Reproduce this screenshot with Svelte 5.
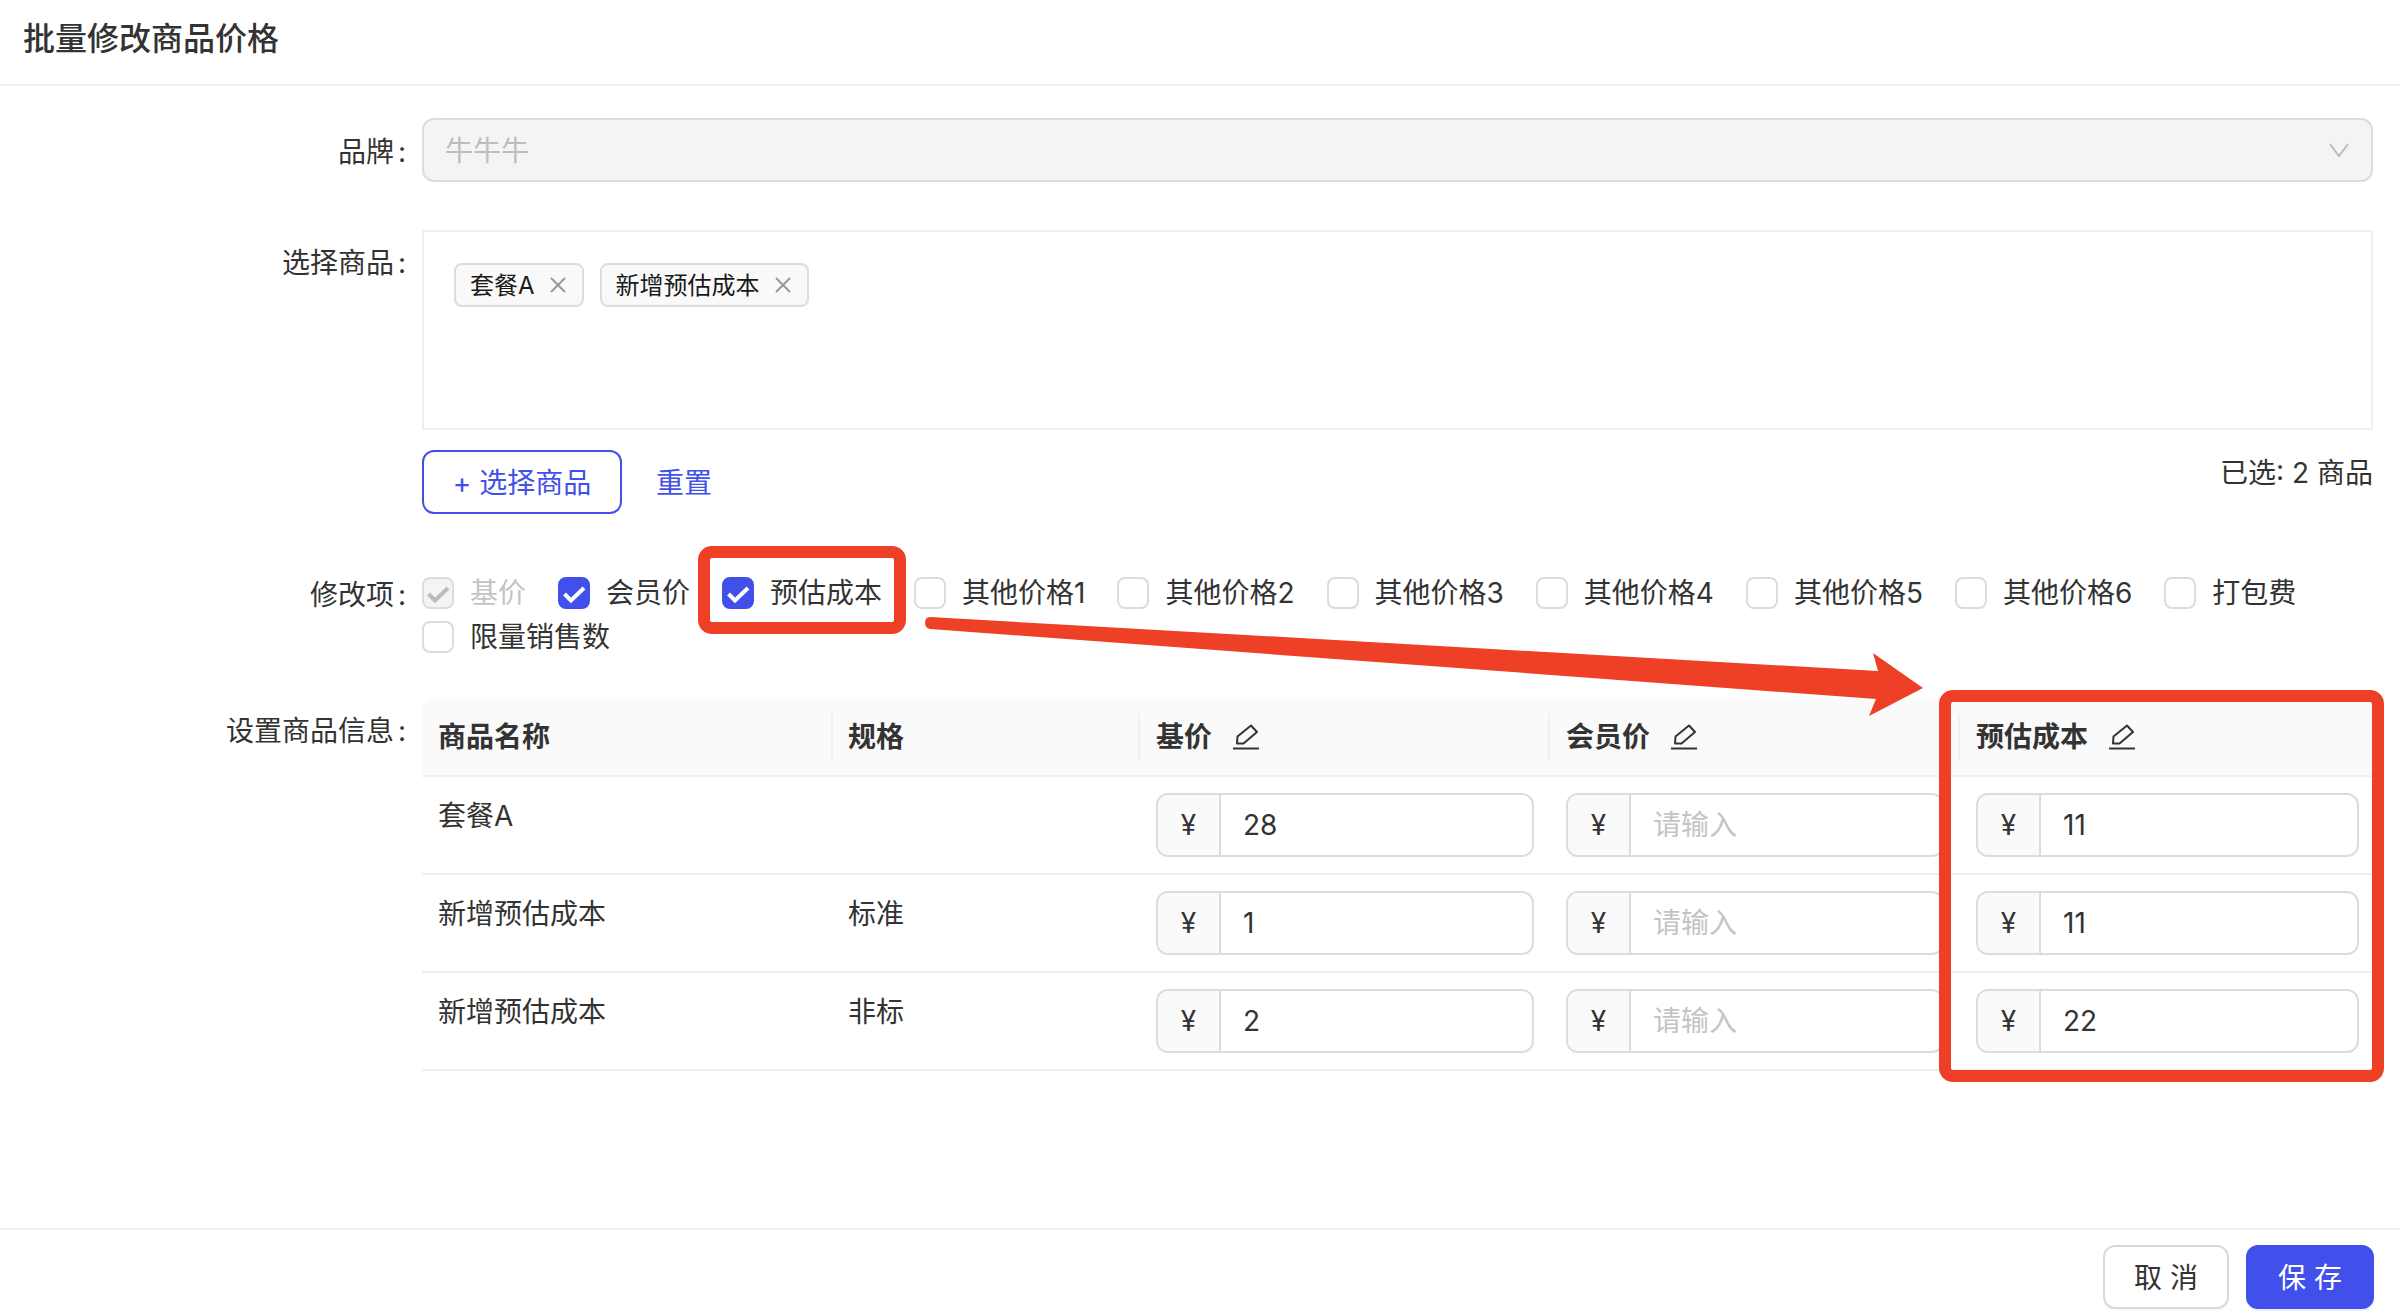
<script>
	const options = [
		{ name: "基价", checked: true, disabled: true },
		{ name: "会员价", checked: true },
		{ name: "预估成本", checked: true },
		{ name: "其他价格1" },
		{ name: "其他价格2" },
		{ name: "其他价格3" },
		{ name: "其他价格4" },
		{ name: "其他价格5" },
		{ name: "其他价格6" },
		{ name: "打包费" },
		{ name: "限量销售数" }
	]
	const tags = ["套餐A", "新增预估成本"]
	const rows = [
		{ name: "套餐A", spec: "", base: "28", cost: "11" },
		{ name: "新增预估成本", spec: "标准", base: "1", cost: "11" },
		{ name: "新增预估成本", spec: "非标", base: "2", cost: "22" }
	]
	const priceCols = ["基价", "会员价", "预估成本"]
</script>

{#snippet pencil()}
	<svg class="pencil" width="26" height="26" viewBox="0 0 26 26" fill="none" stroke="#333" stroke-width="2">
		<path d="M4 19.500 4.500 12.500 18 1.500 24 8 10.500 19.500Z" stroke-linejoin="round" />
		<path d="M0 24.500H26" />
	</svg>
{/snippet}

{#snippet money(value, placeholder)}
	<div class="money">
		<span class="prefix">¥</span>
		<span class="value" class:empty={!value}>{value || placeholder}</span>
	</div>
{/snippet}

<div class="page">
	<header class="top">批量修改商品价格</header>

	<main class="form">
		<div class="row brand">
			<div class="label">品牌<i>:</i></div>
			<div class="select">
				<span>牛牛牛</span>
				<svg width="20" height="14" viewBox="0 0 20 14" fill="none" stroke="#bbb" stroke-width="2"><path d="M1 1 10 13 19 1" /></svg>
			</div>
		</div>

		<div class="row goods">
			<div class="label">选择商品<i>:</i></div>
			<div class="tagbox">
				{#each tags as tag}
					<span class="tag">
						<span class="tag-name">{tag}</span>
						<svg width="16" height="16" viewBox="0 0 16 16" stroke="#999" stroke-width="2"><path d="M1 1 15 15M15 1 1 15" /></svg>
					</span>
				{/each}
			</div>
		</div>

		<div class="row actions">
			<div class="label"></div>
			<div class="actions-body">
				<button class="outline">+ 选择商品</button>
				<button class="link">重置</button>
				<span class="count">已选: 2 商品</span>
			</div>
		</div>

		<div class="row items">
			<div class="label">修改项<i>:</i></div>
			<div class="checks">
				{#each options as opt}
					<label class="check" class:disabled={opt.disabled}>
						<span class="box" class:on={opt.checked}>
							{#if opt.checked}
								<svg width="28" height="28" viewBox="0 0 28 28" fill="none" stroke="currentColor" stroke-width="4"><path d="M4.500 15 11 21.500 24 9" /></svg>
							{/if}
						</span>
						{opt.name}
					</label>
				{/each}
			</div>
		</div>

		<div class="row info">
			<div class="label">设置商品信息<i>:</i></div>
			<table>
				<colgroup>
					<col style="width:409px" />
					<col style="width:307px" />
					<col style="width:410px" />
					<col style="width:410px" />
					<col />
				</colgroup>
				<thead>
					<tr>
						<th><div class="cell first">商品名称</div></th>
						<th><div class="cell second">规格</div></th>
						{#each priceCols as col}
							<th><div class="cell">{col}{@render pencil()}</div></th>
						{/each}
					</tr>
				</thead>
				<tbody>
					{#each rows as r}
						<tr>
							<td class="text">{r.name}</td>
							<td class="text spec">{r.spec}</td>
							<td>{@render money(r.base, "")}</td>
							<td>{@render money("", "请输入")}</td>
							<td>{@render money(r.cost, "")}</td>
						</tr>
					{/each}
				</tbody>
			</table>
		</div>
	</main>

	<footer class="bottom">
		<button class="cancel">取 消</button>
		<button class="save">保 存</button>
	</footer>

	<!-- hand drawn annotation on top of the screenshot -->
	<svg class="marks" width="2400" height="1316" viewBox="0 0 2400 1316" fill="none">
		<rect x="704" y="552" width="196" height="76" rx="8" stroke="#ee4026" stroke-width="12" />
		<rect x="1945" y="696" width="433" height="380" rx="8" stroke="#ee4026" stroke-width="12" />
		<path d="M930 617 1878 671 1873 653 1923 688 1869 716 1876 699 930 629Q925 628 925 623 925 617 930 617Z" fill="#ee4026" />
	</svg>
</div>

<style>
	:global(body) {
		margin: 0;
		background: #fff;
	}
	.page {
		position: relative;
		display: flex;
		flex-direction: column;
		height: 1316px;
		overflow: hidden;
		font-family: Inter, "Noto Sans CJK SC", "Noto Sans", sans-serif;
		font-size: 28px;
		line-height: 44px;
		color: #333;
	}
	.top {
		box-sizing: border-box;
		height: 86px;
		padding: 17px 23px 0;
		border-bottom: 2px solid #f2f2f2;
		font-size: 32px;
		font-weight: 500;
	}
	.form {
		flex: 1;
		padding: 32px 27px 0 0;
	}
	.row {
		display: grid;
		grid-template-columns: 406px 1fr;
		column-gap: 16px;
	}
	.label {
		text-align: right;
	}
	.label i {
		margin-left: 4px;
		font-style: normal;
	}
	.brand .label {
		padding-top: 12px;
	}
	.select {
		box-sizing: border-box;
		display: flex;
		align-items: center;
		justify-content: space-between;
		height: 64px;
		padding: 0 22px 0 21px;
		border: 2px solid #dcdcdc;
		border-radius: 12px;
		background: #f4f4f4;
		color: #bdbdbd;
	}
	.select span {
		padding-top: 2px;
	}
	.goods {
		margin-top: 48px;
	}
	.goods .label {
		padding-top: 11px;
	}
	.tagbox {
		box-sizing: border-box;
		display: flex;
		align-items: flex-start;
		gap: 16px;
		height: 200px;
		padding: 31px 30px;
		border: 2px solid #eeeef5;
	}
	.tag {
		box-sizing: border-box;
		display: flex;
		align-items: center;
		gap: 15px;
		height: 44px;
		padding: 0 16px 0 14px;
		border: 2px solid #dcdcdc;
		border-radius: 8px;
		background: #f9f9f9;
		font-size: 24px;
		line-height: 40px;
		color: #1a1a1a;
	}
	.tag-name {
		padding-top: 2px;
	}
	.actions {
		margin-top: 20px;
	}
	.actions-body {
		display: flex;
		align-items: flex-start;
	}
	button {
		box-sizing: border-box;
		height: 64px;
		margin: 0;
		padding: 2px 0 0;
		border: 2px solid transparent;
		border-radius: 12px;
		background: #fff;
		font: inherit;
		color: inherit;
	}
	.outline {
		width: 200px;
		border-color: #4150ea;
		color: #4150ea;
	}
	.link {
		margin-left: 34px;
		border: 0;
		color: #4150ea;
	}
	.count {
		margin-left: auto;
		margin-top: 1px;
	}
	.items {
		margin-top: 57px;
	}
	.items .label {
		padding-top: 2px;
	}
	.checks {
		display: flex;
		flex-wrap: wrap;
		column-gap: 32px;
	}
	.check {
		display: flex;
		align-items: center;
		gap: 16px;
	}
	.check.disabled {
		color: #c4c4c4;
	}
	.box {
		box-sizing: border-box;
		display: flex;
		align-items: center;
		justify-content: center;
		width: 32px;
		height: 32px;
		border: 2px solid #dcdcdc;
		border-radius: 8px;
		background: #fff;
	}
	.box.on {
		border-color: #4150ea;
		background: #4150ea;
		color: #fff;
	}
	.disabled .box {
		border-color: #dcdcdc;
		background: #f4f4f4;
		color: #bbb;
	}
	.info {
		margin-top: 40px;
	}
	.info .label {
		padding-top: 10px;
	}
	table {
		width: 100%;
		table-layout: fixed;
		border-collapse: separate;
		border-spacing: 0;
	}
	th {
		box-sizing: border-box;
		height: 76px;
		padding: 15px 0;
		border-bottom: 2px solid #f0f0f0;
		background: #fafafa;
		font-weight: 600;
		text-align: left;
	}
	th:first-child {
		border-top-left-radius: 12px;
	}
	.cell {
		display: flex;
		align-items: center;
		height: 46px;
		padding-left: 16px;
		border-left: 2px solid #f0f0f0;
	}
	.cell.first {
		padding-left: 16px;
		border-left: 0;
	}
	.cell.second {
		padding-left: 15px;
	}
	.pencil {
		margin-left: 21px;
	}
	td {
		box-sizing: border-box;
		height: 98px;
		padding: 16px 14px 16px 18px;
		border-bottom: 2px solid #f0f0f0;
		vertical-align: top;
	}
	td.text {
		padding: 17px 16px 0 16px;
	}
	td.spec {
		padding-left: 17px;
	}
	.money {
		box-sizing: border-box;
		display: flex;
		height: 64px;
		border: 2px solid #dcdcdc;
		border-radius: 12px;
		line-height: 60px;
		overflow: hidden;
	}
	.prefix {
		flex: none;
		width: 63px;
		border-right: 2px solid #dcdcdc;
		background: #fafafa;
		text-align: center;
		box-sizing: border-box;
	}
	.value {
		padding-left: 22px;
	}
	.value.empty {
		color: #c4c4c4;
	}
	.bottom {
		box-sizing: border-box;
		display: flex;
		justify-content: flex-end;
		gap: 17px;
		height: 88px;
		padding: 15px 26px 0 0;
		border-top: 2px solid #f0f0f0;
	}
	.cancel {
		width: 126px;
		border-color: #d9d9d9;
		box-shadow: 0 2px 0 rgba(0, 0, 0, 0.02);
	}
	.save {
		width: 128px;
		background: #4150ea;
		border-color: #4150ea;
		color: #fff;
		box-shadow: 0 2px 0 rgba(65, 80, 234, 0.1);
	}
	.marks {
		position: absolute;
		top: 0;
		left: 0;
		pointer-events: none;
	}
</style>
